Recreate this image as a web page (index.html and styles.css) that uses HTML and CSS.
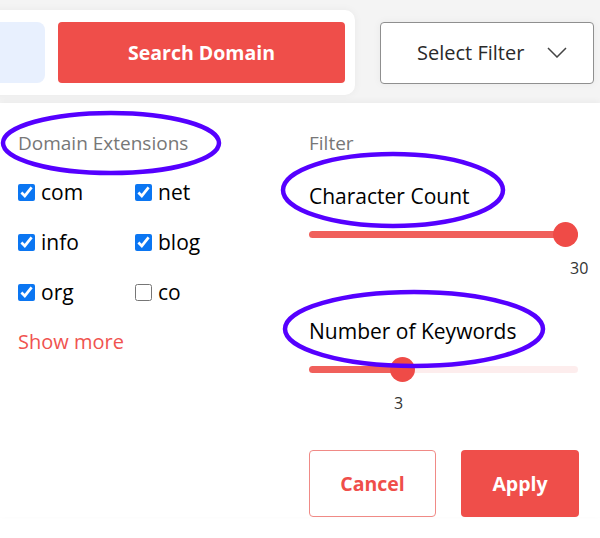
FILE: index.html
```html
<!DOCTYPE html>
<html lang="en">
<head>
    <meta charset="UTF-8">
    <meta name="viewport" content="width=device-width, initial-scale=1.0">
    <title>Domain Search Filter</title>
    <link rel="stylesheet" href="styles.css">
</head>
<body>
    <div class="toolbar">
        <div class="search-card">
            <div class="search-input"></div>
            <button class="search-btn">Search Domain</button>
        </div>
        <button class="select-filter">
            <span>Select Filter</span>
            <svg width="20" height="11" viewBox="0 0 20 11"><path d="M1 1 L10 10 L19 1" fill="none" stroke="#444" stroke-width="1.5"/></svg>
        </button>
    </div>

    <div class="filter-panel">
        <div class="extensions">
            <div class="section-title">Domain Extensions</div>
            <div class="ext-grid">
                <label class="ext"><input type="checkbox" checked> com</label>
                <label class="ext"><input type="checkbox" checked> net</label>
                <label class="ext"><input type="checkbox" checked> info</label>
                <label class="ext"><input type="checkbox" checked> blog</label>
                <label class="ext"><input type="checkbox" checked> org</label>
                <label class="ext"><input type="checkbox"> co</label>
            </div>
            <a class="show-more" href="#">Show more</a>
        </div>

        <div class="filters">
            <div class="section-title">Filter</div>

            <div class="filter-name first">Character Count</div>
            <input class="range" type="range" min="1" max="30" value="30" style="--fill: 100%">
            <div class="range-value" style="padding-left: 261px">30</div>

            <div class="filter-name">Number of Keywords</div>
            <input class="range" type="range" min="1" max="7" value="3" style="--fill: 35%">
            <div class="range-value" style="padding-left: 85px">3</div>

            <div class="actions">
                <button class="btn-cancel">Cancel</button>
                <button class="btn-apply">Apply</button>
            </div>
        </div>
    </div>

    <!-- annotation marks drawn over the screenshot -->
    <svg class="annotations" width="600" height="538" viewBox="0 0 600 538">
        <ellipse cx="111" cy="143" rx="108" ry="30" />
        <ellipse cx="393" cy="190" rx="110" ry="36" />
        <ellipse cx="414" cy="329" rx="129" ry="37" />
    </svg>
</body>
</html>
```

FILE: styles.css
```css
body {
    margin: 0;
    position: relative;
    width: 600px;
    height: 538px;
    overflow: hidden;
    font-family: "Open Sans", "Noto Sans", sans-serif;
    background-color: #fff;
    color: #000;
}

button {
    font-family: inherit;
    cursor: pointer;
}

.toolbar {
    display: flex;
    align-items: center;
    padding: 10px 0 8px;
    background-color: #f4f4f4;
}

.search-card {
    display: flex;
    gap: 13px;
    margin-left: -30px;
    padding: 12px 10px 12px 12px;
    background-color: #fff;
    border-radius: 10px;
    box-shadow: 0 0 8px rgba(0, 0, 0, 0.05);
}

.search-input {
    width: 63px;
    height: 61px;
    background-color: #e8f0fe;
    border-radius: 8px;
}

.search-btn {
    width: 287px;
    height: 61px;
    border: none;
    border-radius: 4px;
    background-color: #ef4e4a;
    color: #fff;
    font-size: 19.5px;
    font-weight: 700;
}

.select-filter {
    display: flex;
    align-items: center;
    justify-content: space-between;
    width: 214px;
    height: 62px;
    margin-left: 25px;
    padding: 0 26px 0 36px;
    background-color: #fff;
    border: 1px solid #8f8f8f;
    border-radius: 4px;
    box-shadow: 0 0 8px rgba(0, 0, 0, 0.05);
    font-size: 20px;
    color: #2a2a2a;
}

.filter-panel {
    display: grid;
    grid-template-columns: 291px 270px;
    padding: 28px 0 0 18px;
    box-shadow: 0 -2px 6px rgba(0, 0, 0, 0.04);
}

.section-title {
    font-size: 19px;
    line-height: 24px;
    color: #777;
}

.ext-grid {
    display: grid;
    grid-template-columns: 117px 117px;
    margin-top: 12px;
}

.ext {
    display: flex;
    align-items: center;
    gap: 6px;
    height: 50px;
    font-size: 21px;
    font-weight: 500;
}

.ext input {
    width: 17px;
    height: 17px;
    margin: 0;
    accent-color: #0b76f2;
}

.show-more {
    display: block;
    line-height: 50px;
    font-size: 20px;
    color: #f0534f;
    text-decoration: none;
}

.filter-name {
    margin-top: 39px;
    font-size: 21px;
    font-weight: 500;
    line-height: 28px;
}

.filter-name.first {
    margin-top: 27px;
}

.range {
    -webkit-appearance: none;
    appearance: none;
    display: block;
    width: 269px;
    height: 25px;
    margin: 12px 0 0;
    background: transparent;
}

.range::-webkit-slider-runnable-track {
    height: 7px;
    border-radius: 4px;
    background: linear-gradient(to right, #f0605b var(--fill), #fdeded var(--fill));
}

.range::-webkit-slider-thumb {
    -webkit-appearance: none;
    width: 25px;
    height: 25px;
    margin-top: -9px;
    border-radius: 50%;
    background-color: #ef4b47;
}

.range-value {
    margin-top: 11px;
    font-size: 16px;
    line-height: 20px;
    color: #333;
}

.actions {
    display: flex;
    gap: 25px;
    margin-top: 37px;
}

.btn-cancel,
.btn-apply {
    height: 67px;
    border-radius: 4px;
    font-size: 19.5px;
    font-weight: 700;
}

.btn-cancel {
    width: 127px;
    background-color: #fff;
    border: 1px solid #f08a86;
    color: #ef4e4a;
}

.btn-apply {
    width: 118px;
    background-color: #ef4e4a;
    border: none;
    color: #fff;
}

.annotations {
    position: absolute;
    top: 0;
    left: 0;
    pointer-events: none;
}

.annotations ellipse {
    fill: none;
    stroke: #5500ff;
    stroke-width: 4.5;
}
```
